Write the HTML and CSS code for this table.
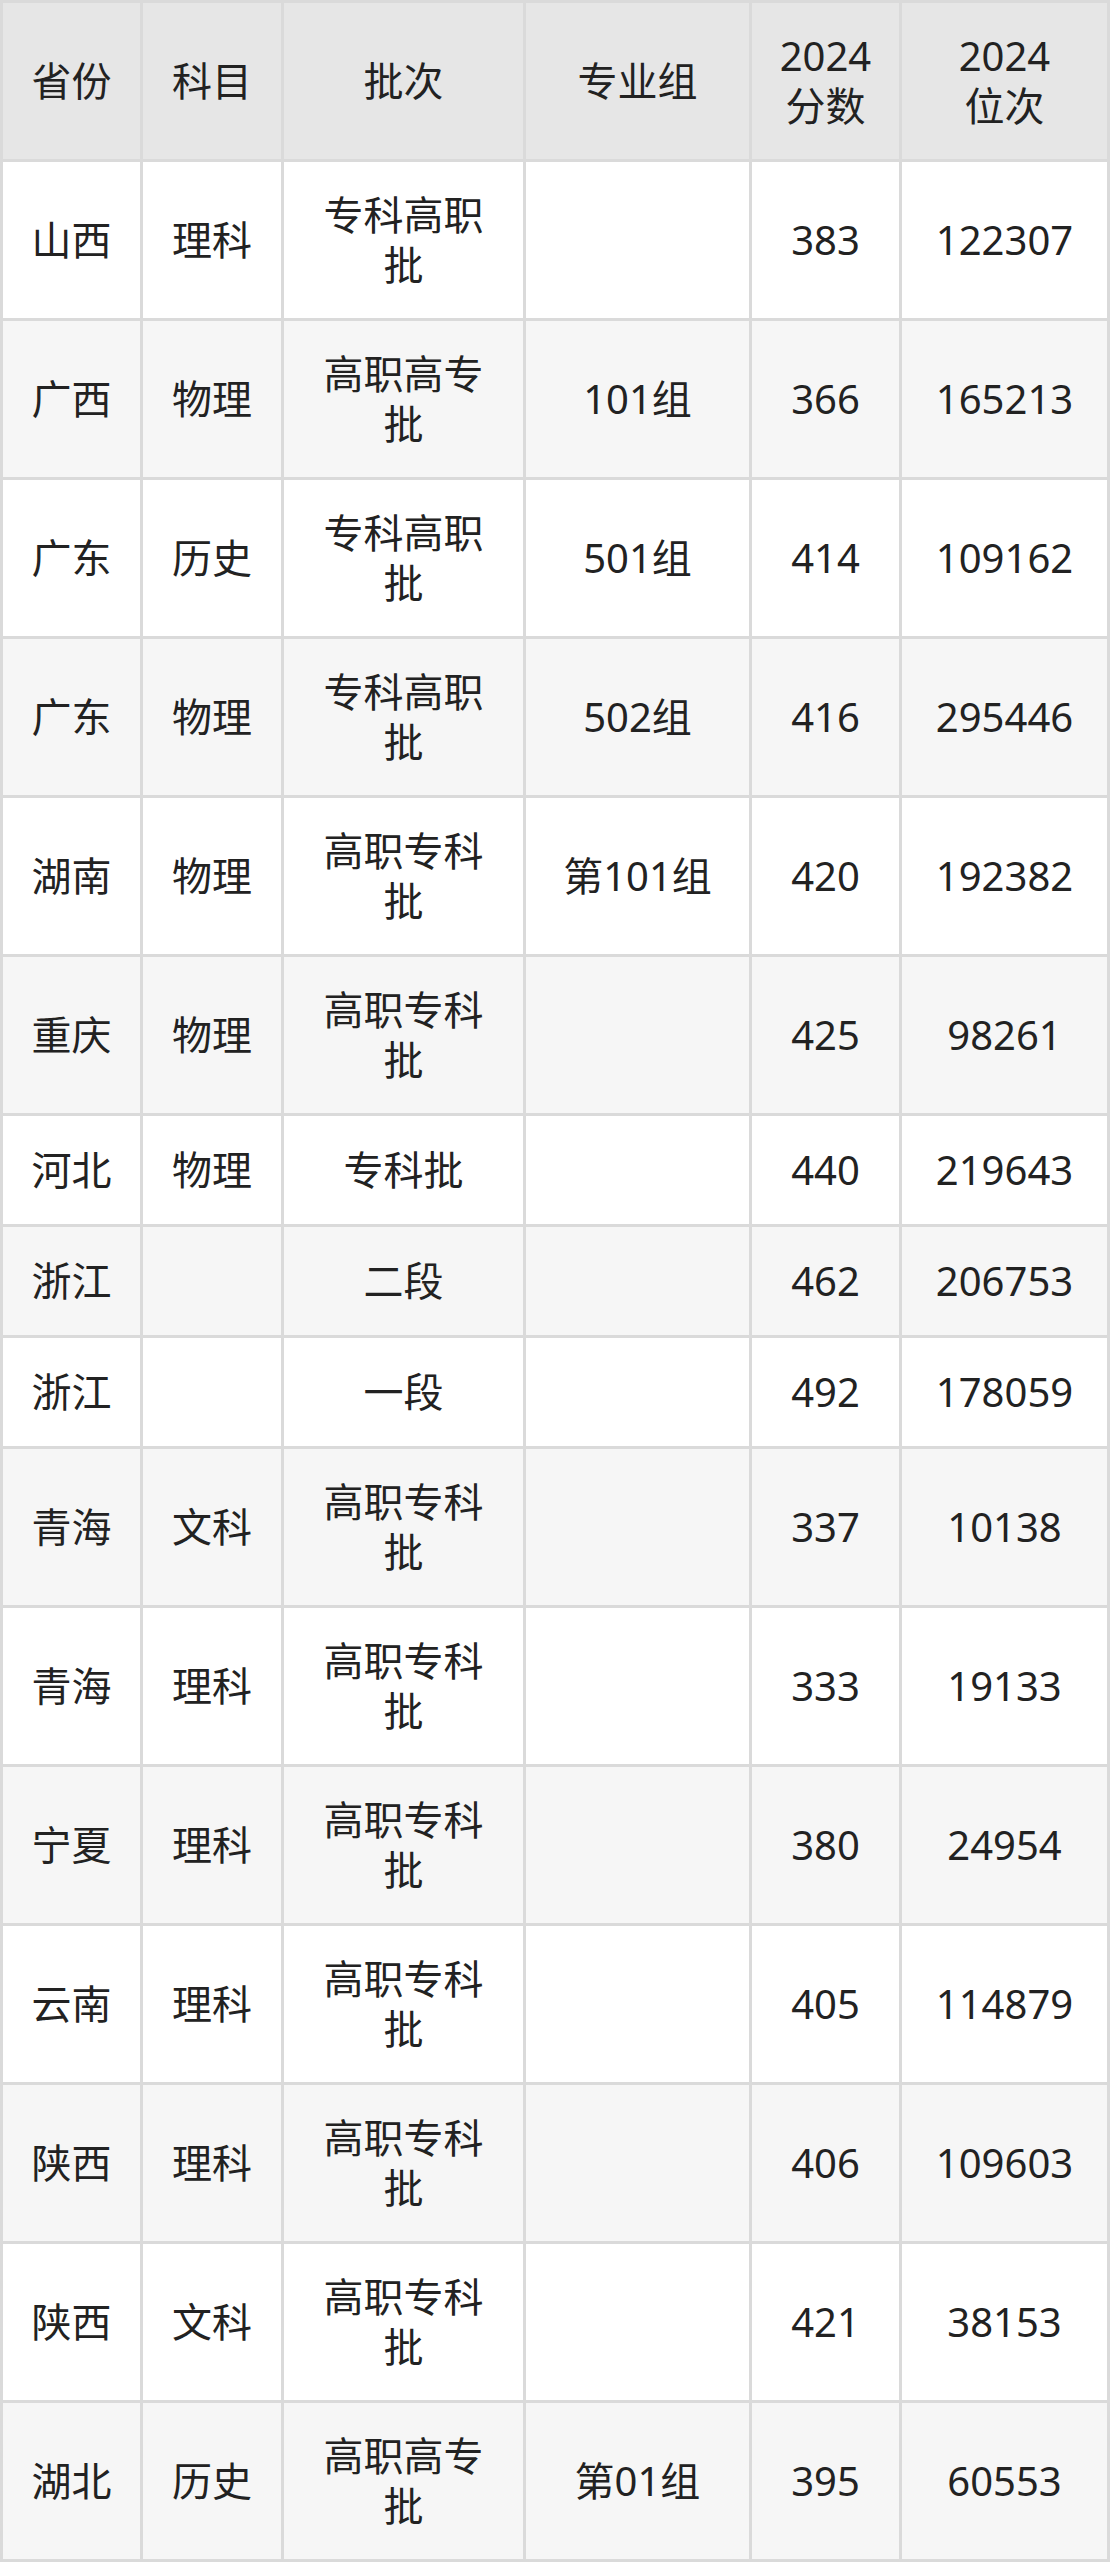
FILE: index.html
```html
<!DOCTYPE html>
<html lang="zh-CN">
<head>
<meta charset="utf-8">
<title>2024 分数位次</title>
<link rel="stylesheet" href="styles.css">
</head>
<body>
<table class="score-table">
  <colgroup>
    <col class="c-prov"><col class="c-subj"><col class="c-batch"><col class="c-group"><col class="c-score"><col class="c-rank">
  </colgroup>
  <thead>
    <tr class="head">
      <th>省份</th><th>科目</th><th>批次</th><th>专业组</th><th>2024<br>分数</th><th>2024<br>位次</th>
    </tr>
  </thead>
  <tbody>
    <tr class="tall"><td>山西</td><td>理科</td><td>专科高职批</td><td></td><td>383</td><td>122307</td></tr>
    <tr class="tall"><td>广西</td><td>物理</td><td>高职高专批</td><td>101组</td><td>366</td><td>165213</td></tr>
    <tr class="tall"><td>广东</td><td>历史</td><td>专科高职批</td><td>501组</td><td>414</td><td>109162</td></tr>
    <tr class="tall"><td>广东</td><td>物理</td><td>专科高职批</td><td>502组</td><td>416</td><td>295446</td></tr>
    <tr class="tall"><td>湖南</td><td>物理</td><td>高职专科批</td><td>第101组</td><td>420</td><td>192382</td></tr>
    <tr class="tall"><td>重庆</td><td>物理</td><td>高职专科批</td><td></td><td>425</td><td>98261</td></tr>
    <tr class="short"><td>河北</td><td>物理</td><td>专科批</td><td></td><td>440</td><td>219643</td></tr>
    <tr class="short"><td>浙江</td><td></td><td>二段</td><td></td><td>462</td><td>206753</td></tr>
    <tr class="short"><td>浙江</td><td></td><td>一段</td><td></td><td>492</td><td>178059</td></tr>
    <tr class="tall"><td>青海</td><td>文科</td><td>高职专科批</td><td></td><td>337</td><td>10138</td></tr>
    <tr class="tall"><td>青海</td><td>理科</td><td>高职专科批</td><td></td><td>333</td><td>19133</td></tr>
    <tr class="tall"><td>宁夏</td><td>理科</td><td>高职专科批</td><td></td><td>380</td><td>24954</td></tr>
    <tr class="tall"><td>云南</td><td>理科</td><td>高职专科批</td><td></td><td>405</td><td>114879</td></tr>
    <tr class="tall"><td>陕西</td><td>理科</td><td>高职专科批</td><td></td><td>406</td><td>109603</td></tr>
    <tr class="tall"><td>陕西</td><td>文科</td><td>高职专科批</td><td></td><td>421</td><td>38153</td></tr>
    <tr class="tall"><td>湖北</td><td>历史</td><td>高职高专批</td><td>第01组</td><td>395</td><td>60553</td></tr>
  </tbody>
</table>
</body>
</html>
```

FILE: styles.css
```css
html, body {
  margin: 0;
  padding: 0;
  background: #ffffff;
}

.score-table {
  width: 1110px;
  table-layout: fixed;
  border-collapse: separate;
  border-spacing: 3px;
  background: #dadada;
  font-family: "Noto Sans", "Noto Sans CJK SC", sans-serif;
  font-size: 40px;
  line-height: 50px;
  color: #222222;
}

.c-prov { width: 137px; }
.c-subj { width: 138px; }
.c-batch { width: 239px; }
.c-group { width: 223px; }
.c-score { width: 147px; }
.c-rank { width: 205px; }

.score-table th,
.score-table td {
  padding: 0 26px;
  text-align: center;
  vertical-align: middle;
  font-weight: normal;
  background: #ffffff;
}

.score-table .head th {
  height: 156px;
  background: #e6e6e6;
}

.score-table tr.tall td { height: 156px; }
.score-table tr.short td { height: 108px; }

.score-table tbody tr:nth-child(even) td {
  background: #f6f6f6;
}
```
